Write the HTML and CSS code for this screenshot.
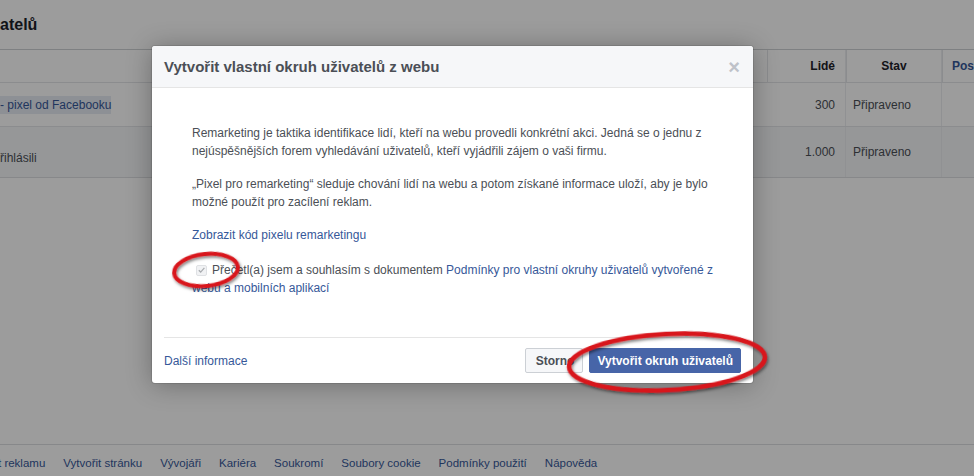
FILE: index.html
```html
<!DOCTYPE html>
<html lang="cs">
<head>
<meta charset="utf-8">
<title>Vlastní okruhy uživatelů</title>
<link rel="stylesheet" href="styles.css">
</head>
<body>
<div class="page">
  <h1 class="page-title">atelů</h1>
  <div class="table">
    <div class="row head">
      <div class="c-name"></div>
      <div class="c-num">Lidé</div>
      <div class="c-state center">Stav</div>
      <div class="c-last link">Posl</div>
    </div>
    <div class="row r1">
      <div class="c-name"><span class="sel">- pixel od Facebooku</span></div>
      <div class="c-num">300</div>
      <div class="c-state">Připraveno</div>
      <div class="c-last"></div>
    </div>
    <div class="row r2">
      <div class="c-name low">řihlásili</div>
      <div class="c-num">1.000</div>
      <div class="c-state">Připraveno</div>
      <div class="c-last"></div>
    </div>
  </div>
  <div class="spacer"></div>
  <footer class="foot">
    <a>t reklamu</a><a>Vytvořit stránku</a><a>Vývojáři</a><a>Kariéra</a><a>Soukromí</a><a>Soubory cookie</a><a>Podmínky použití</a><a>Nápověda</a>
  </footer>
</div>
<div class="overlay"></div>
<div class="modal">
  <div class="m-head">
    <span class="m-title">Vytvořit vlastní okruh uživatelů z webu</span>
    <span class="m-close">×</span>
  </div>
  <div class="m-body">
    <p>Remarketing je taktika identifikace lidí, kteří na webu provedli konkrétní akci. Jedná se o jednu z nejúspěšnějších forem vyhledávání uživatelů, kteří vyjádřili zájem o vaši firmu.</p>
    <p>„Pixel pro remarketing“ sleduje chování lidí na webu a potom získané informace uloží, aby je bylo možné použít pro zacílení reklam.</p>
    <p><a class="link">Zobrazit kód pixelu remarketingu</a></p>
    <p class="agree"><span class="cb"><svg viewBox="0 0 10 10" width="10" height="10"><path d="M2 5.2 L4.1 7.3 L8.2 2.6" fill="none" stroke="#a9acb0" stroke-width="1.4"/></svg></span>Přečetl(a) jsem a souhlasím s dokumentem <a class="link">Podmínky pro vlastní okruhy uživatelů vytvořené z webu a mobilních aplikací</a></p>
  </div>
  <div class="m-foot">
    <a class="link">Další informace</a>
    <div class="btns">
      <button class="btn">Storno</button>
      <button class="btn primary">Vytvořit okruh uživatelů</button>
    </div>
  </div>
</div>
<svg class="annot" width="974" height="476" viewBox="0 0 974 476">
  <defs>
    <filter id="sh" x="-20%" y="-40%" width="140%" height="180%">
      <feDropShadow dx="1" dy="2" stdDeviation="1.5" flood-color="#000" flood-opacity="0.5"/>
    </filter>
  </defs>
  <ellipse cx="206" cy="270" rx="32" ry="16" transform="rotate(-6 206 270)" fill="none" stroke="#d8141a" stroke-width="4" filter="url(#sh)"/>
  <ellipse cx="667" cy="362" rx="98" ry="28" transform="rotate(-3 667 362)" fill="none" stroke="#d8141a" stroke-width="4.5" filter="url(#sh)"/>
</svg>
</body>
</html>
```
FILE: styles.css
```css
html, body {
  margin: 0;
  padding: 0;
  width: 974px;
  height: 476px;
  overflow: hidden;
  font-family: "Liberation Sans", Arial, sans-serif;
  font-size: 12px;
  color: #4b4f56;
  background: #ffffff;
}
.page {
  display: flex;
  flex-direction: column;
  height: 476px;
}
.page-title {
  margin: 0;
  height: 49px;
  box-sizing: border-box;
  padding-top: 16px;
  font-size: 16px;
  font-weight: bold;
  color: #1d2129;
  line-height: 18px;
}
.table {
  border-top: 1px solid #cfd1d5;
  border-bottom: 1px solid #dddfe2;
}
.row {
  display: grid;
  grid-template-columns: 767px 79px 96px 1fr;
  border-bottom: 1px solid #e3e5e8;
}
.row:last-child { border-bottom: none; }
.row > div {
  display: flex;
  align-items: center;
  box-sizing: border-box;
}
.head { height: 32px; font-weight: bold; color: #1d2129; background: #fff; }
.head .c-num, .head .c-state { border-left: 1px solid #e3e5e8; }
.head .c-last { border-left: 1px solid #e3e5e8; padding-left: 9px; }
.r1 { height: 43px; }
.r2 { height: 50px; background: #f6f7f9; }
.c-num { justify-content: flex-end; padding-right: 10px; border-right: 1px solid #eceef1; }
.c-state { padding-left: 7px; border-right: 1px solid #eceef1; }
.c-state.center { justify-content: center; padding-left: 0; }
.c-name .sel { background: #e6ebf4; color: #365899; padding: 2px 0; }
.c-name.low { align-items: flex-end !important; padding-bottom: 12px; }
.link { color: #365899; text-decoration: none; cursor: pointer; }
.spacer { flex: 1; }
.foot {
  height: 32px;
  box-sizing: border-box;
  border-top: 1px solid #dddfe2;
  display: flex;
  align-items: center;
  gap: 18px;
  padding-top: 5px;
  margin-left: -2px;
  font-size: 11.5px;
}
.foot a { color: #365899; }

.overlay {
  position: absolute;
  left: 0; top: 0;
  width: 974px; height: 476px;
  background: rgba(0, 0, 0, 0.39);
}
.modal {
  position: absolute;
  left: 152px;
  top: 46px;
  width: 601px;
  background: #fff;
  border-radius: 3px;
  box-shadow: 0 2px 26px rgba(0,0,0,.3), 0 0 0 1px rgba(0,0,0,.1);
}
.m-head {
  height: 42px;
  box-sizing: border-box;
  background: #f6f7f9;
  border-bottom: 1px solid #e5e5e5;
  border-radius: 3px 3px 0 0;
  display: flex;
  align-items: center;
  justify-content: space-between;
  padding: 0 12px;
}
.m-title {
  font-size: 15px;
  font-weight: bold;
  color: #4b4f56;
}
.m-close {
  color: #bec2c9;
  font-size: 20px;
  font-weight: bold;
  line-height: 1;
  margin-right: 1px;
}
.m-body {
  padding: 36px 40px 40px 40px;
  line-height: 18px;
  color: #4b4f56;
}
.m-body p { margin: 0 0 15px 0; }
.m-body p.agree { margin: 17px 0 0 0; }
.cb {
  display: inline-flex;
  align-items: center;
  justify-content: center;
  width: 11px;
  height: 11px;
  box-sizing: border-box;
  border: 1px solid #dfe1e4;
  background: #f1f2f4;
  border-radius: 2px;
  margin: 0 5px 0 4px;
  vertical-align: -1px;
}
.m-foot {
  margin: 0 12px;
  border-top: 1px solid #e5e5e5;
  padding: 10px 0 10px;
  display: flex;
  align-items: center;
  justify-content: space-between;
}
.btns { display: flex; gap: 6px; }
.btn {
  font-family: "Liberation Sans", Arial, sans-serif;
  font-size: 12px;
  font-weight: bold;
  height: 25px;
  padding: 0 7px;
  border: 1px solid #ccd0d5;
  background: #f6f7f9;
  color: #4b4f56;
  border-radius: 2px;
}
.btn:first-child { padding: 0 8px 0 10px; }
.btn.primary {
  background: #4765a8;
  border-color: #4765a8;
  color: #fff;
}
.annot {
  position: absolute;
  left: 0; top: 0;
  pointer-events: none;
}
```
